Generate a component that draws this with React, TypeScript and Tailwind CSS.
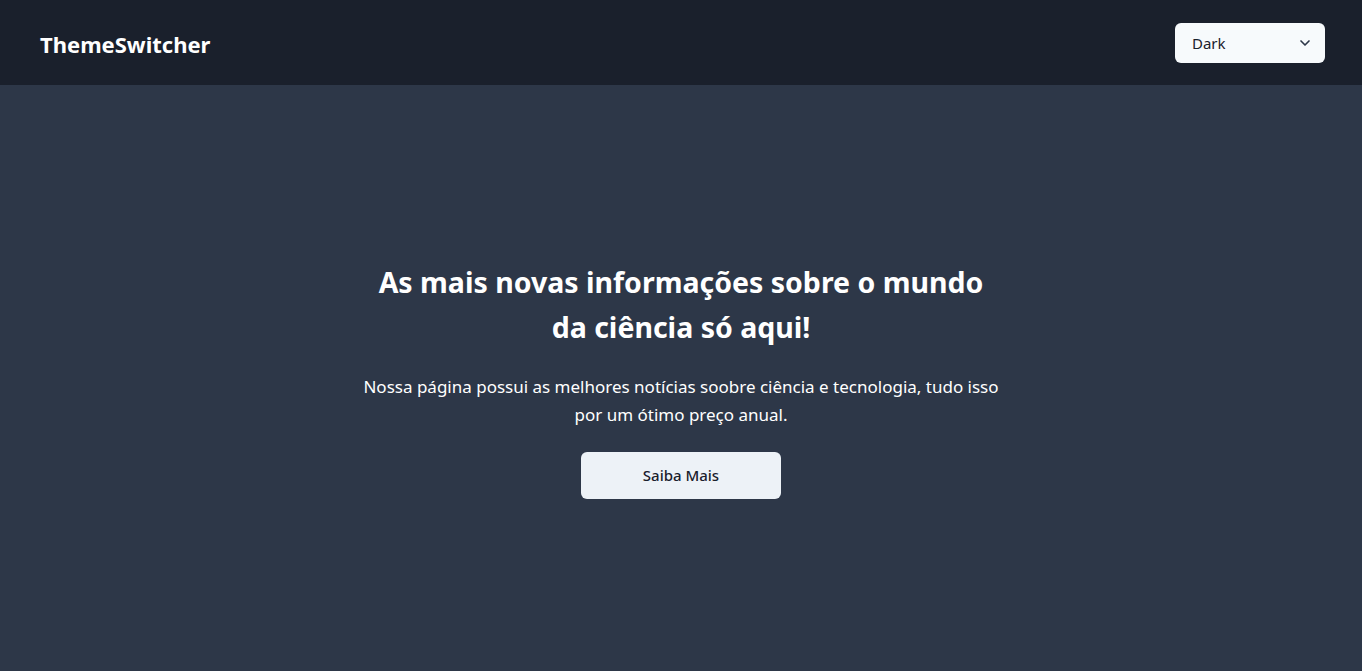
import { ChevronDown } from "lucide-react";

export default function App() {
  return (
    <div
      className="min-h-screen flex flex-col bg-[#2d3748]"
      style={{ fontFamily: "'Noto Sans', sans-serif" }}
    >
      <header className="h-[85px] bg-[#1a202c] flex items-center justify-between pl-10 pr-[37px]">
        <h1 className="text-white text-[22px] font-bold pt-[3px]">ThemeSwitcher</h1>
        <div className="relative">
          <select className="appearance-none w-[150px] h-[40px] rounded-md bg-[#f7fafc] text-[#1a202c] text-[15px] pl-[17px] pr-8 pt-[2px] outline-none">
            <option>Dark</option>
            <option>Light</option>
          </select>
          <ChevronDown
            size={16}
            strokeWidth={2.5}
            className="absolute right-[12px] top-[12px] text-[#2d3748] pointer-events-none"
          />
        </div>
      </header>
      <main className="flex-1 flex items-center justify-center pt-[3px]">
        <div className="w-[650px] text-center flex flex-col items-center">
          <h2 className="max-w-[615px] text-white text-[28.5px] font-bold leading-[45px]">
            As mais novas informações sobre o mundo da ciência só aqui!
          </h2>
          <p className="text-white text-[17px] leading-[28px] mt-[23px]">
            Nossa página possui as melhores notícias soobre ciência e tecnologia, tudo isso por um ótimo preço anual.
          </p>
          <button className="mt-[23px] w-[200px] h-[47px] rounded-md bg-[#edf2f7] text-[#1a202c] text-[15px] font-medium">
            Saiba Mais
          </button>
        </div>
      </main>
    </div>
  );
}
